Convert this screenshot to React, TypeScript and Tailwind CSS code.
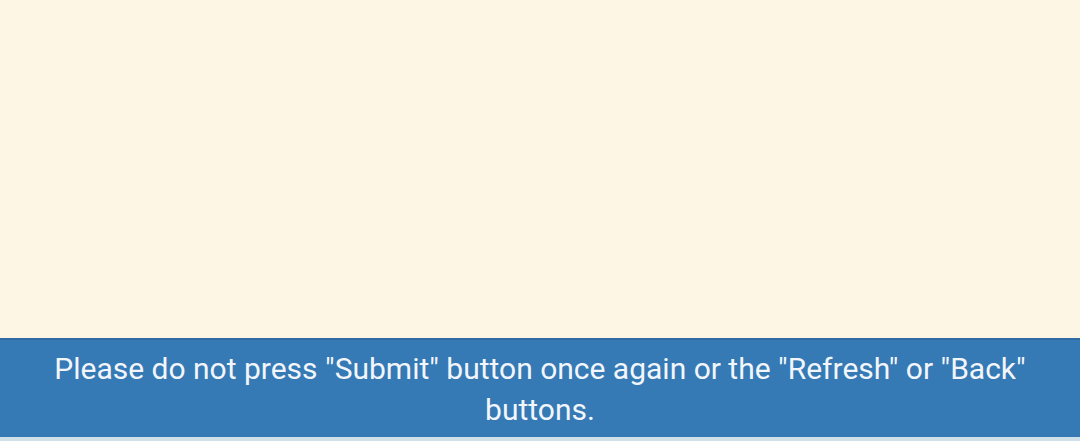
export default function App() {
  return (
    <div className="h-[441px] w-[1080px] flex flex-col bg-[#fdf6e4] overflow-hidden">
      <div className="flex-1" />
      <div className="border-t-2 border-[#2f6ca3] bg-[#3579b5] h-[99px] flex items-center justify-center px-6">
        <p className="text-center text-[30px] leading-[41px] text-[#f2f6fb]" style={{ fontFamily: 'Roboto, "Liberation Sans", sans-serif' }}>
          Please do not press "Submit" button once again or the "Refresh" or "Back" buttons.
        </p>
      </div>
      <div className="h-[4px] bg-[#cfe0e8]" />
    </div>
  )
}
